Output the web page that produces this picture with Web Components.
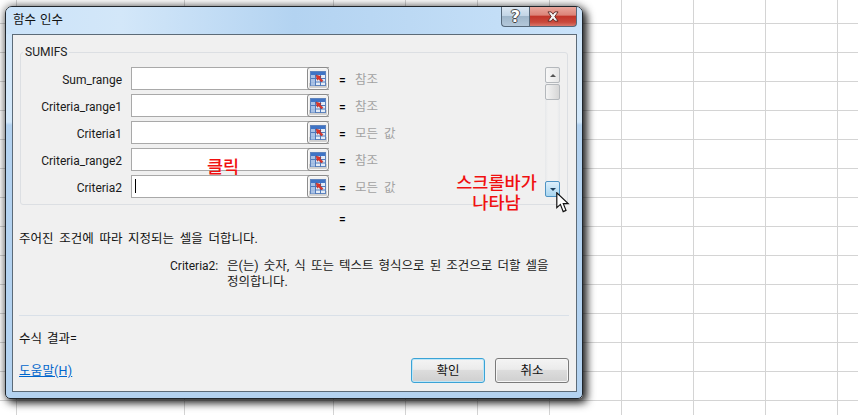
<!DOCTYPE html>
<html lang="ko"><head><meta charset="utf-8"><title>함수 인수</title>
<style>
html,body{margin:0;padding:0;background:#fff;width:858px;height:415px;overflow:hidden}
body{font:12px/16px Roboto,"Noto Sans CJK KR",sans-serif;color:#1a1a1a}
</style></head><body>
<x-sheet>
<x-dialog caption="함수 인수" fn="SUMIFS">
<x-arg label="Sum_range" value="참조"></x-arg>
<x-arg label="Criteria_range1" value="참조"></x-arg>
<x-arg label="Criteria1" value="모든 값"></x-arg>
<x-arg label="Criteria_range2" value="참조"></x-arg>
<x-arg label="Criteria2" value="모든 값" focused></x-arg>
</x-dialog>
<x-note style="left:207px;top:157px">클릭</x-note>
<x-note style="left:456px;top:173px;width:81px">스크롤바가<br>나타남</x-note>
<x-pointer></x-pointer>
</x-sheet>
<script>
function def(name,html){
  customElements.define(name,class extends HTMLElement{
    connectedCallback(){
      if(this.shadowRoot)return;
      const r=this.attachShadow({mode:'open'});
      r.innerHTML=typeof html==='function'?html(this):html;
    }
  });
}
const vx=[16,184,333,405,477,549,621,693,765,837];
const g='linear-gradient(#d4d4d4,#d4d4d4)';
def('x-sheet',`<style>:host{display:block;position:relative;width:858px;height:415px;overflow:hidden;
background-color:#fff;
background-image:${vx.map(()=>g).join(',')},linear-gradient(to bottom,transparent 28px,#d4d4d4 28px);
background-size:${vx.map(()=>'1px 100%').join(',')},100% 29px;
background-position:${vx.map(x=>x+'px 0').join(',')},0 -5px;
background-repeat:${vx.map(()=>'no-repeat').join(',')},repeat-y}</style><slot></slot>`);

def('x-note',`<style>:host{position:absolute;display:block;color:#f01010;font:500 17.5px/20px "Liberation Sans","Noto Sans CJK KR",sans-serif;text-align:center;white-space:nowrap}</style><slot></slot>`);

def('x-pointer',`<style>:host{position:absolute;left:556px;top:192px;display:block;width:14px;height:21px}svg{display:block}</style>
<svg width="14" height="21" viewBox="0 0 14 21"><path d="M.8.8V15.6L4.4 12.4 7.2 19.6 10 18.4 7.3 11.6H12.2Z" fill="#fff" stroke="#111" stroke-width="1.2" stroke-linejoin="miter"/></svg>`);

def('x-titlebtns',`<style>:host{display:flex;height:20px;margin-right:5px}
div{box-sizing:border-box;height:20px;border:1px solid #56687a;border-top:0;display:flex;align-items:center;justify-content:center}
.h{width:28px;border-right:0;border-radius:0 0 0 4px;background:linear-gradient(#dbe7f3 0,#c3d5e6 45%,#9fb6ca 50%,#b4c8da 100%);color:#fff;font:700 16px/18px "DejaVu Sans",sans-serif;text-shadow:-1px 0 #444,1px 0 #444,0 -1px #444,0 1px #444}
.c{width:48px;border-radius:0 0 4px 0;background:linear-gradient(#e9a79d 0,#dc8478 42%,#c2362a 50%,#c9493c 80%,#d9776b 100%)}
svg{display:block}</style>
<div class="h">?</div><div class="c"><svg width="12" height="11" viewBox="0 0 13 12"><path d="M1 1H4.500L6.500 3.500 8.500 1H12L8.500 6 12 11H8.500L6.500 8.500 4.500 11H1L4.500 6Z" fill="#f4f4f4" stroke="#5a2a26" stroke-width="1"/></svg></div>`);

def('x-scrollbar',`<style>:host{display:flex;flex-direction:column;justify-content:space-between;box-sizing:border-box;width:15px;height:130px;margin-top:14px;background:linear-gradient(90deg,#e6e8ea,#f1f1f1 20%,#f1f1f1 80%,#e6e8ea)}
.top{display:flex;flex-direction:column;gap:1px}
div.b{box-sizing:border-box;width:15px;height:16px;border:1px solid #b4b8bc;border-radius:2px;background:linear-gradient(90deg,#f8f8f8,#e6e6e6);display:flex;align-items:center;justify-content:center}
.th{height:16px!important;background:linear-gradient(90deg,#f4f4f4,#d6d6d6)!important}
.d{border-color:#4f94c4!important;background:linear-gradient(#dceffb,#a9d6f0)!important}
i{display:block;width:0;height:0;border:3.500px solid transparent}
.u{border-bottom-color:#555;border-top:0;border-left-width:3px;border-right-width:3px}
.n{border-top-color:#1c3f5c;border-bottom:0}</style>
<div class="top"><div class="b"><i class="u"></i></div><div class="b th"></div></div><div class="b d"><i class="n"></i></div>`);

def('x-refbtn',`<style>:host{box-sizing:border-box;display:flex;align-items:center;justify-content:center;width:22px;height:23px;border:1px solid #8c8c8c;border-radius:3px;background:linear-gradient(#f2f2f2 0,#e8e8e8 70%,#c8c8c8 71%,#d4d4d4);box-shadow:inset 0 0 0 1px #f8f8f8}svg{display:block}</style>
<svg width="16" height="16" viewBox="0 0 16 16">
<rect x=".5" y=".5" width="15" height="14" fill="#e4ecf7" stroke="#5f84bd"/>
<rect x="1" y="1" width="14" height="3" fill="#3f74c6"/>
<path d="M1 7.500H15M1 11H15M5.500 4V15M10.500 4V15" stroke="#4f7abb" fill="none"/>
<rect x="1" y="4" width="4" height="3" fill="#a9c2e6"/><rect x="1" y="8" width="4" height="3" fill="#a9c2e6"/><rect x="1" y="11.500" width="4" height="3" fill="#a9c2e6"/>
<path d="M6 4 11 5.500 10 6.800 13 9.500 11.500 11 8.500 8 7.300 9.200Z" fill="#e0342a" stroke="#a02018" stroke-width=".5"/>
</svg>`);

def('x-arg',h=>`<style>:host{display:flex;align-items:center;height:23px;margin-bottom:4px}
.l{width:101px;text-align:right;padding:2px 9px 0 0;color:#1a1a1a;white-space:nowrap}
.f{box-sizing:border-box;width:198px;height:23px;border:1px solid #a9a9a9;background:#fff;display:flex;justify-content:space-between;border-right:0}
.fi{flex:1;position:relative}
.caret{position:absolute;left:3px;top:3px;width:1px;height:14px;background:#000}
.eq{width:16px;margin-left:10px;padding-top:2px;color:#000;font-weight:500}
.v{color:#a2a2a2;font-size:12.500px;word-spacing:3px;padding-top:2px}
x-refbtn{margin:-1px 0}</style>
<span class="l">${h.getAttribute('label')}</span>
<div class="f"><div class="fi">${h.hasAttribute('focused')?'<div class="caret"></div>':''}</div><x-refbtn></x-refbtn></div>
<span class="eq">=</span><span class="v">${h.getAttribute('value')}</span>`);

def('x-pushbtn',`<style>:host{box-sizing:border-box;display:flex;align-items:center;justify-content:center;width:74px;height:25px;border:1px solid #7a7a7a;border-radius:3px;background:linear-gradient(#f4f4f4 0,#ebebeb 45%,#dcdcdc 50%,#cfcfcf 100%);box-shadow:inset 0 0 0 1px #f6f6f6;color:#111;font-size:12.500px}
:host([primary]){border:1.500px solid #3aa3d6;box-shadow:inset 0 0 0 1px #bfe6f7}</style><slot></slot>`);

def('x-dialog',h=>`<style>
:host{position:absolute;left:5px;top:6px;display:flex;flex-direction:column;box-sizing:border-box;width:578px;height:393px;border:1px solid #20262c;border-radius:7px 7px 5px 5px;
background:linear-gradient(#cfe5f9 0,#d3e8fa 115px,#b3d2f0 118px,#b3d2f0 100%);
box-shadow:4px 4px 9px rgba(0,0,0,.78),0 0 10px rgba(0,0,0,.55)}
.title{flex:none;height:27px;display:flex;justify-content:space-between;align-items:flex-start;border-radius:6px 6px 0 0;
background:linear-gradient(90deg,#cbe3f9 0,#d3e7f9 20%,#b3d3f1 50%,#bcd9f4 70%,#cae3fa 100%)}
.cap{margin:5px 0 0 7px;word-spacing:1px;font-size:12.500px;line-height:16px;color:#111}
.client{flex:1;box-sizing:border-box;margin:0 5px 6px 6px;border:1px solid #5c6b78;background:#f0f0f0;display:flex;flex-direction:column;min-height:0}
.group{position:relative;flex:none;box-sizing:border-box;margin:17px 8px 0 7px;height:153px;border:1px solid #dcdfe3;border-radius:3px;display:flex}
.legend{position:absolute;left:2px;top:-9px;padding:0 2px;background:#f0f0f0;line-height:16px;color:#222}
.rows{width:524px;padding-top:14px}
.eq{height:26px;line-height:28px;margin-left:326px;color:#000;font-weight:500}
.desc{margin:0 0 0 6px;line-height:16px;word-spacing:2.600px;font-size:12.500px;white-space:nowrap;color:#111}
.help{display:flex;margin:11px 0 0 157px;line-height:16px}
.help b{font-weight:400;width:57px;white-space:nowrap}
.help span{word-spacing:2px;font-size:12.500px;white-space:nowrap}
hr{margin:25px 7px 0 6px;border:0;height:1px;background:#d9e0e8}
.res{margin:15px 0 0 6px;word-spacing:2px;font-size:12.500px;color:#111}
.foot{display:flex;justify-content:space-between;align-items:center;margin:11px 7px 0 6px}
a{color:#0066cc;text-decoration:underline;font-size:12.500px;letter-spacing:.2px;padding-top:1px}
.btns{display:flex;gap:10px}
</style>
<div class="title"><div class="cap">${h.getAttribute('caption')}</div><x-titlebtns></x-titlebtns></div>
<div class="client">
<div class="group"><div class="legend">${h.getAttribute('fn')}</div><div class="rows"><slot></slot></div><x-scrollbar></x-scrollbar></div>
<div class="eq">=</div>
<p class="desc">주어진 조건에 따라 지정되는 셀을 더합니다.</p>
<div class="help"><b>Criteria2:</b><span>은(는) 숫자, 식 또는 텍스트 형식으로 된 조건으로 더할 셀을<br>정의합니다.</span></div>
<hr>
<div class="res">수식 결과=</div>
<div class="foot"><a href="#">도움말(H)</a><div class="btns"><x-pushbtn primary>확인</x-pushbtn><x-pushbtn>취소</x-pushbtn></div></div>
</div>`);
</script>
</body></html>
